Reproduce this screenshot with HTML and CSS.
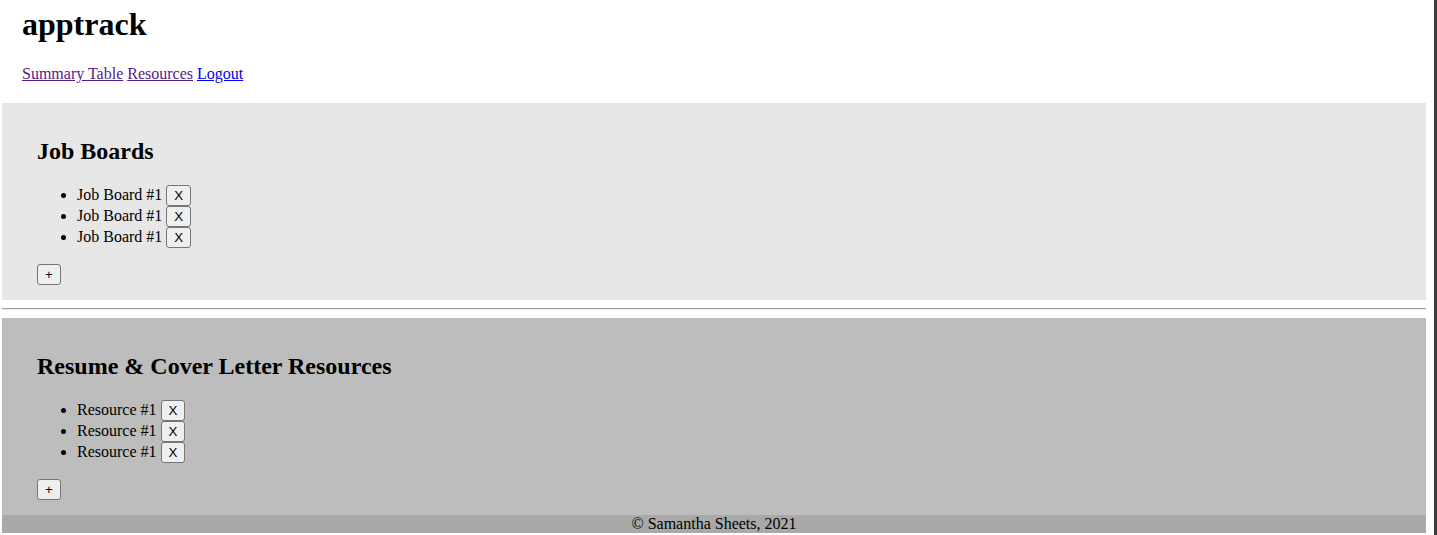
FILE: index.html
```html
<!DOCTYPE html>
<html lang="en">
<head>
    <meta charset="UTF-8">
    <meta name="viewport" content="width=device-width, initial-scale=1.0">
    <title>apptrack - Resources</title>
    <link rel="stylesheet" href="styles.css">
</head>
<body>
    <header class="top">
        <h1>apptrack</h1>
        <nav class="links">
            <a href="#summary" class="visited">Summary Table</a>
            <a href="#resources" class="visited">Resources</a>
            <a href="#logout">Logout</a>
        </nav>
    </header>
    <main>
        <section class="box job-boards">
            <h2>Job Boards</h2>
            <ul>
                <li>Job Board #1 <button class="btn">X</button></li>
                <li>Job Board #1 <button class="btn">X</button></li>
                <li>Job Board #1 <button class="btn">X</button></li>
            </ul>
            <div><button class="btn">+</button></div>
        </section>
        <hr>
        <section class="box resumes">
            <h2>Resume &amp; Cover Letter Resources</h2>
            <ul>
                <li>Resource #1 <button class="btn">X</button></li>
                <li>Resource #1 <button class="btn">X</button></li>
                <li>Resource #1 <button class="btn">X</button></li>
            </ul>
            <div><button class="btn">+</button></div>
        </section>
    </main>
    <footer class="foot">&copy; Samantha Sheets, 2021</footer>
</body>
</html>
```

FILE: styles.css
```css
html {
    background: #fff;
}
body {
    font-family: "Liberation Serif", "Times New Roman", serif;
    font-size: 16px;
    margin: 0;
    padding: 0 8px 2px 2px;
    border-right: 3px solid #3c3c3c;
    min-height: 533px;
}
.top {
    padding: 0 20px;
}
.top h1 {
    font-size: 32px;
    margin: 6px 0 22px;
}
.links {
    padding-bottom: 20px;
}
.links a {
    color: #0000ee;
}
.links a.visited {
    color: #551a8b;
}
.box {
    padding: 15px 35px;
}
.box h2 {
    font-size: 24px;
    margin: 20px 0;
}
.box ul {
    margin: 16px 0;
    padding-left: 40px;
}
.box li {
    height: 21px;
}
.job-boards {
    background-color: #e7e7e7;
}
.resumes {
    background-color: #bdbdbd;
}
hr {
    margin: 8px 0;
    border: 0;
    border-top: 1px solid #9a9a9a;
    border-bottom: 1px solid #eee;
}
.btn {
    font-family: "Liberation Sans", Arial, sans-serif;
    font-size: 13.333px;
    height: 21px;
    padding: 1px 7px;
    border: 1px solid #767676;
    border-radius: 3px;
    background-color: #efefef;
    color: #000;
}
.foot {
    background-color: #a9a9a9;
    text-align: center;
}
```
